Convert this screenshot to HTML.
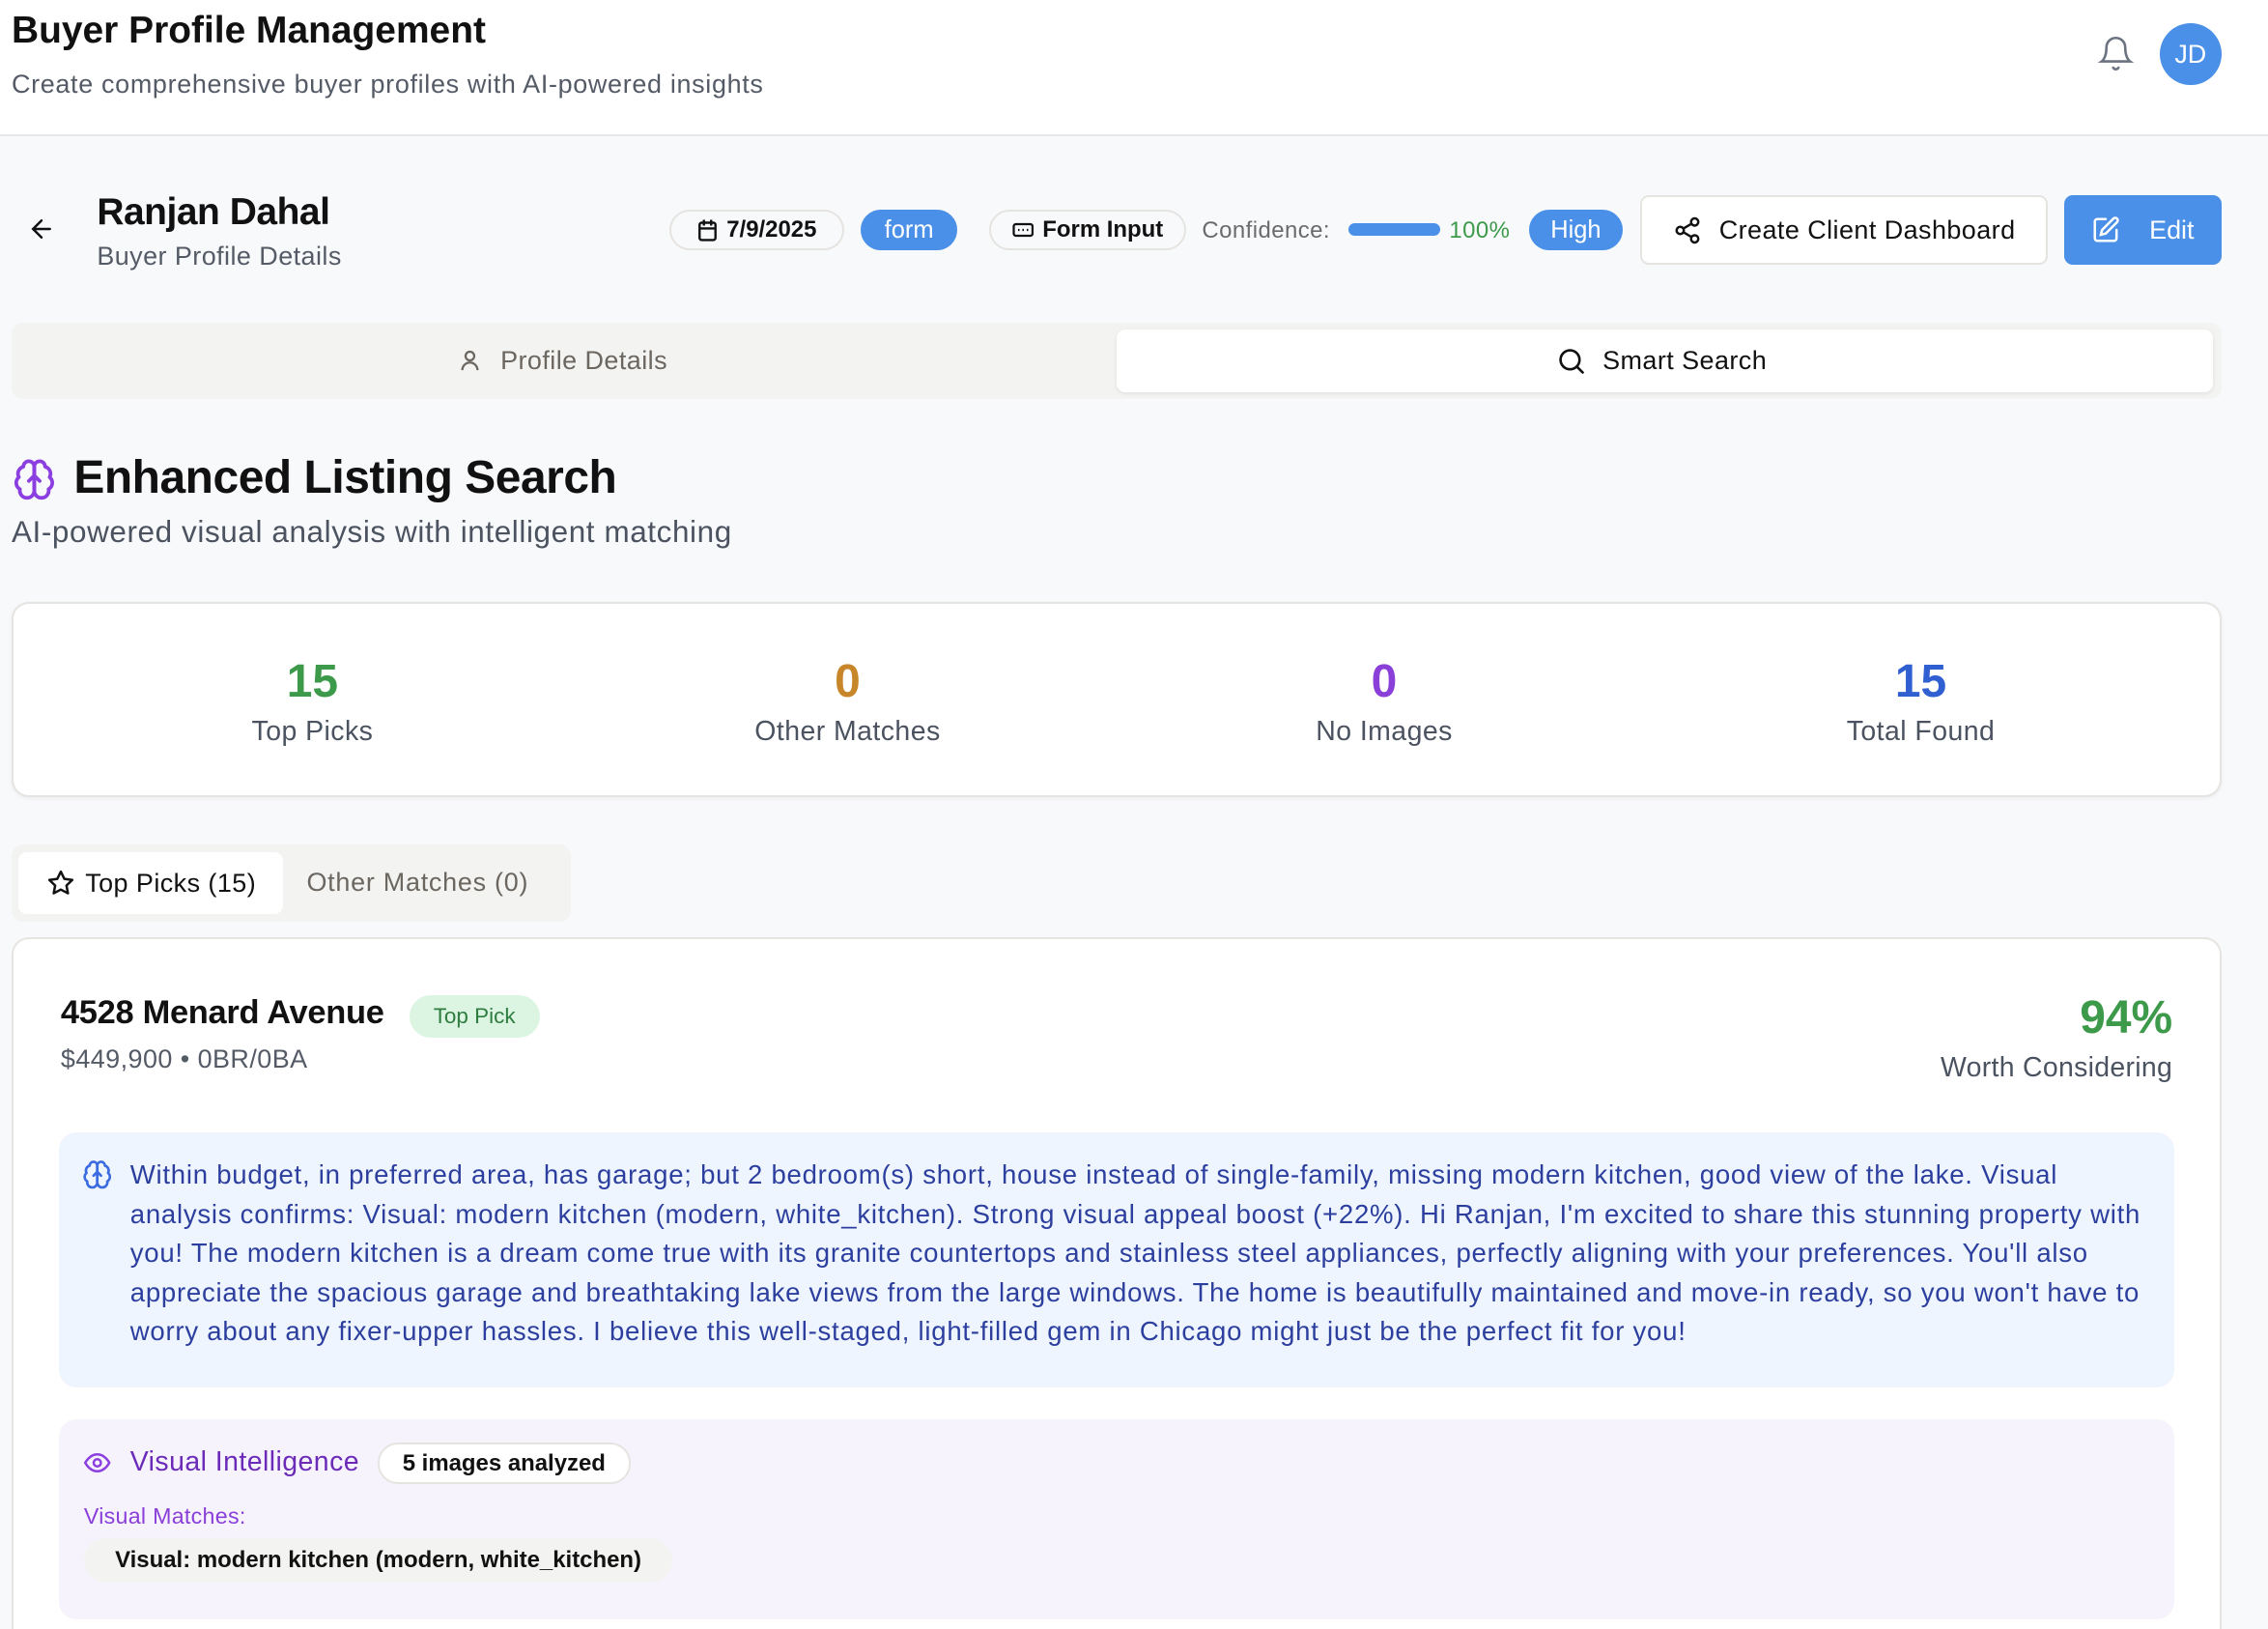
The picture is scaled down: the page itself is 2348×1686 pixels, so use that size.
<!DOCTYPE html>
<html><head><meta charset="utf-8"><style>
*{box-sizing:border-box;margin:0;padding:0}
html,body{width:2348px;height:1686px;overflow:hidden;background:#f8f9fb}
#w{zoom:1.4974;width:1568px;height:1126px;position:relative;font-family:"Liberation Sans",sans-serif;color:#111}
.a{position:absolute;white-space:nowrap}
.pill{position:absolute;height:28px;border-radius:14px;border:1.5px solid #e6e4e1;background:#f8f9fb;display:flex;align-items:center;justify-content:center;font-size:16px;font-weight:bold;gap:6px}
.blue{background:#4a90e8;border-color:#4a90e8;color:#fff;font-weight:normal}
svg{display:block}
</style></head><body><div id="w">
<div class="a" style="left:0;top:0;width:1568px;height:94px;background:#fff;border-bottom:1.5px solid #e5e7eb"></div>
<div class="a" style="left:8px;top:7px;font-size:26px;font-weight:bold">Buyer Profile Management</div>
<div class="a" style="left:8px;top:48px;font-size:18px;color:#555b66;letter-spacing:.45px">Create comprehensive buyer profiles with AI-powered insights</div>
<svg class="a" style="left:1450px;top:24px" width="26" height="26" viewBox="0 0 24 24" fill="none" stroke="#6b7280" stroke-width="1.6" stroke-linecap="round"><path d="M6 8a6 6 0 0 1 12 0c0 7 3 9 3 9H3s3-2 3-9"/><path d="M10.3 21a1.94 1.94 0 0 0 3.4 0"/></svg>
<div class="a" style="left:1493px;top:16px;width:43px;height:43px;border-radius:50%;background:#4a90e8;color:#fff;font-size:18px;display:flex;align-items:center;justify-content:center">JD</div>

<svg class="a" style="left:19px;top:148px" width="20" height="20" viewBox="0 0 24 24" fill="none" stroke="#111" stroke-width="2" stroke-linecap="round"><path d="M19 12H5M12 19l-7-7 7-7"/></svg>
<div class="a" style="left:67px;top:132px;font-size:26px;font-weight:bold;letter-spacing:-.3px">Ranjan Dahal</div>
<div class="a" style="left:67px;top:167px;font-size:18px;color:#555b66;letter-spacing:.3px">Buyer Profile Details</div>

<div class="pill" style="left:463px;top:145px;width:121px"><svg width="14" height="16" viewBox="0 0 14 16" fill="none" stroke="#111" stroke-width="1.6"><rect x="1.5" y="3" width="11" height="12" rx="1.5"/><path d="M4.5 1v4M9.5 1v4M1.5 7h11"/></svg>7/9/2025</div>
<div class="pill blue" style="left:595px;top:145px;width:67px;font-size:17px">form</div>
<div class="pill" style="left:684px;top:145px;width:136px"><svg width="15" height="12" viewBox="0 0 15 12" fill="none" stroke="#111" stroke-width="1.5"><rect x="1" y="2" width="13" height="8" rx="1.5"/><path d="M4 6h1M7 6h1M10 6h1"/></svg>Form Input</div>
<div class="a" style="left:831px;top:150px;font-size:16px;color:#6b6b6b;letter-spacing:.3px">Confidence:</div>
<div class="a" style="left:932px;top:154px;width:64px;height:9px;border-radius:5px;background:#4a90e8"></div>
<div class="a" style="left:1002px;top:150px;font-size:16px;color:#3d9a4a;letter-spacing:.3px">100%</div>
<div class="pill blue" style="left:1057px;top:145px;width:65px;font-size:17px">High</div>
<div class="a" style="left:1134px;top:135px;width:282px;height:48px;border:1.5px solid #e6e4e1;border-radius:6px;background:#fff;display:flex;align-items:center;justify-content:center;gap:12px;font-size:18px;letter-spacing:.3px"><svg width="20" height="22" viewBox="0 0 24 24" fill="none" stroke="#111" stroke-width="2"><circle cx="18" cy="5" r="3"/><circle cx="6" cy="12" r="3"/><circle cx="18" cy="19" r="3"/><path d="M8.6 13.5l6.8 4M15.4 6.5l-6.8 4"/></svg>Create Client Dashboard</div>
<div class="a" style="left:1427px;top:135px;width:109px;height:48px;border-radius:6px;background:#4a90e8;color:#fff;display:flex;align-items:center;justify-content:center;gap:20px;font-size:18px"><svg width="20" height="20" viewBox="0 0 24 24" fill="none" stroke="#fff" stroke-width="2" stroke-linecap="round"><path d="M12 3H5a2 2 0 0 0-2 2v14a2 2 0 0 0 2 2h14a2 2 0 0 0 2-2v-7"/><path d="M18.4 2.6a2 2 0 0 1 3 3L12 15l-4 1 1-4z"/></svg>Edit</div>

<div class="a" style="left:8px;top:223px;width:1528px;height:53px;border-radius:8px;background:#f3f3f1"></div>
<div class="a" style="left:772px;top:228px;width:758px;height:43px;border-radius:6px;background:#fff;box-shadow:0 1px 3px rgba(0,0,0,.08)"></div>
<div class="a" style="left:316px;top:239px;display:flex;align-items:center;gap:12px;font-size:18px;color:#6b6660;letter-spacing:.3px"><svg width="18" height="20" viewBox="0 0 24 24" fill="none" stroke="#6b6660" stroke-width="2"><circle cx="12" cy="8" r="4"/><path d="M5 21a7 7 0 0 1 14 0"/></svg>Profile Details</div>
<div class="a" style="left:1076px;top:239px;display:flex;align-items:center;gap:11px;font-size:18px;letter-spacing:.3px"><svg width="21" height="21" viewBox="0 0 24 24" fill="none" stroke="#111" stroke-width="2" stroke-linecap="round"><circle cx="11" cy="11" r="7.5"/><path d="M21 21l-4.5-4.5"/></svg>Smart Search</div>

<svg class="a" style="left:9px;top:315px" width="30" height="32" viewBox="0 0 24 24" fill="none" stroke="#8b3fe0" stroke-width="2" stroke-linecap="round" stroke-linejoin="round"><path d="M12 5a3 3 0 1 0-6 .1 4 4 0 0 0-2.5 5.8 4 4 0 0 0 .6 6.6A4 4 0 1 0 12 18Z"/><path d="M12 5a3 3 0 1 1 6 .1 4 4 0 0 1 2.5 5.8 4 4 0 0 1-.6 6.6A4 4 0 1 1 12 18Z"/><path d="M12 5v13M9 13l3-3 3 3"/></svg>
<div class="a" style="left:51px;top:312px;font-size:32px;font-weight:bold;letter-spacing:-.3px">Enhanced Listing Search</div>
<div class="a" style="left:8px;top:356px;font-size:21px;color:#4b5260;letter-spacing:.4px">AI-powered visual analysis with intelligent matching</div>

<div class="a" style="left:8px;top:416px;width:1528px;height:135px;border:1.5px solid #e6e4e1;border-radius:12px;background:#fff;box-shadow:0 1px 3px rgba(0,0,0,.06)"></div>
<div class="a" style="left:116px;top:453px;width:200px;text-align:center"><div style="font-size:32px;font-weight:bold;color:#3d9a4a">15</div><div style="font-size:19px;color:#4b5260;margin-top:5px;letter-spacing:.3px">Top Picks</div></div>
<div class="a" style="left:486px;top:453px;width:200px;text-align:center"><div style="font-size:32px;font-weight:bold;color:#c8862a">0</div><div style="font-size:19px;color:#4b5260;margin-top:5px;letter-spacing:.3px">Other Matches</div></div>
<div class="a" style="left:857px;top:453px;width:200px;text-align:center"><div style="font-size:32px;font-weight:bold;color:#8a3fd8">0</div><div style="font-size:19px;color:#4b5260;margin-top:5px;letter-spacing:.3px">No Images</div></div>
<div class="a" style="left:1228px;top:453px;width:200px;text-align:center"><div style="font-size:32px;font-weight:bold;color:#2f5fd0">15</div><div style="font-size:19px;color:#4b5260;margin-top:5px;letter-spacing:.3px">Total Found</div></div>

<div class="a" style="left:8px;top:584px;width:387px;height:53px;border-radius:8px;background:#f3f3f1"></div>
<div class="a" style="left:13px;top:589px;width:183px;height:43px;border-radius:6px;background:#fff;display:flex;align-items:center;justify-content:center;gap:7px;font-size:18px;letter-spacing:.3px"><svg width="20" height="20" viewBox="0 0 24 24" fill="none" stroke="#111" stroke-width="2" stroke-linejoin="round"><path d="M12 2.5l2.9 6 6.6.9-4.8 4.6 1.2 6.5L12 17.4l-5.9 3.1 1.2-6.5L2.5 9.4l6.6-.9z"/></svg>Top Picks (15)</div>
<div class="a" style="left:212px;top:600px;font-size:18px;color:#6b6660;letter-spacing:.5px">Other Matches (0)</div>

<div class="a" style="left:8px;top:648px;width:1528px;height:500px;border:1.5px solid #e6e4e1;border-radius:12px;background:#fff"></div>
<div class="a" style="left:42px;top:687px;font-size:23px;font-weight:bold;letter-spacing:-.2px">4528 Menard Avenue</div>
<div class="a" style="left:283px;top:688px;width:90px;height:29px;border-radius:15px;background:#dcf5e3;color:#2e7d3f;font-size:15px;display:flex;align-items:center;justify-content:center">Top Pick</div>
<div class="a" style="left:42px;top:722px;font-size:18px;color:#555b66;letter-spacing:.3px">$449,900 • 0BR/0BA</div>
<div class="a" style="left:1300px;top:685px;width:202px;text-align:right;font-size:32px;font-weight:bold;color:#3d9a4a">94%</div>
<div class="a" style="left:1300px;top:727px;width:202px;text-align:right;font-size:19px;color:#4b5260;letter-spacing:.2px">Worth Considering</div>

<div class="a" style="left:41px;top:783px;width:1462px;height:176px;border-radius:12px;background:#eef5fe"></div>
<svg class="a" style="left:57px;top:801px" width="21" height="22" viewBox="0 0 24 24" fill="none" stroke="#3b6be0" stroke-width="2" stroke-linecap="round" stroke-linejoin="round"><path d="M12 5a3 3 0 1 0-6 .1 4 4 0 0 0-2.5 5.8 4 4 0 0 0 .6 6.6A4 4 0 1 0 12 18Z"/><path d="M12 5a3 3 0 1 1 6 .1 4 4 0 0 1 2.5 5.8 4 4 0 0 1-.6 6.6A4 4 0 1 1 12 18Z"/><path d="M12 5v13M9 13l3-3 3 3"/></svg>
<div class="a" style="left:90px;top:799px;width:1400px;white-space:normal;font-size:18.4px;line-height:27px;color:#2c3f9e;letter-spacing:.5px">Within budget, in preferred area, has garage; but 2 bedroom(s) short, house instead of single-family, missing modern kitchen, good view of the lake. Visual analysis confirms: Visual: modern kitchen (modern, white_kitchen). Strong visual appeal boost (+22%). Hi Ranjan, I'm excited to share this stunning property with you! The modern kitchen is a dream come true with its granite countertops and stainless steel appliances, perfectly aligning with your preferences. You'll also appreciate the spacious garage and breathtaking lake views from the large windows. The home is beautifully maintained and move-in ready, so you won't have to worry about any fixer-upper hassles. I believe this well-staged, light-filled gem in Chicago might just be the perfect fit for you!</div>

<div class="a" style="left:41px;top:981px;width:1462px;height:138px;border-radius:12px;background:#f7f3fd"></div>
<svg class="a" style="left:57px;top:1001px" width="21" height="20" viewBox="0 0 24 24" fill="none" stroke="#8b3fe0" stroke-width="2"><path d="M2 12s3.5-7 10-7 10 7 10 7-3.5 7-10 7S2 12 2 12z"/><circle cx="12" cy="12" r="3"/></svg>
<div class="a" style="left:90px;top:1000px;font-size:19px;color:#6b2bb8;letter-spacing:.3px">Visual Intelligence</div>
<div class="pill" style="left:261px;top:997px;width:175px;height:29px;background:#fff;font-size:16px">5 images analyzed</div>
<div class="a" style="left:58px;top:1039px;font-size:15.5px;color:#8a3fd8;letter-spacing:.2px">Visual Matches:</div>
<div class="a" style="left:58px;top:1063px;width:407px;height:31px;border-radius:15px;background:#f3f3f1;display:flex;align-items:center;justify-content:center;font-size:16px;font-weight:bold">Visual: modern kitchen (modern, white_kitchen)</div>
</div></body></html>
